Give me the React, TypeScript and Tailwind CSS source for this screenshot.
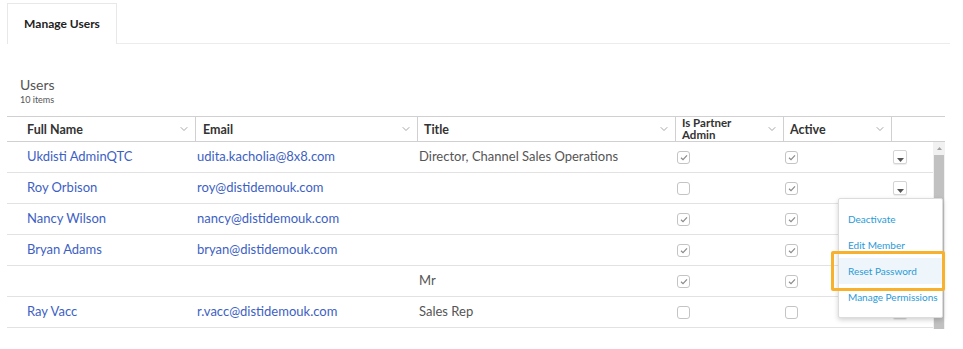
import { ChevronDown } from 'lucide-react'

// Types
interface UserRow {
  name: string
  email: string
  title: string
  partnerAdmin: boolean
  active: boolean
}

const users: UserRow[] = [
  { name: 'Ukdisti AdminQTC', email: 'udita.kacholia@8x8.com', title: 'Director, Channel Sales Operations', partnerAdmin: true, active: true },
  { name: 'Roy Orbison', email: 'roy@distidemouk.com', title: '', partnerAdmin: false, active: true },
  { name: 'Nancy Wilson', email: 'nancy@distidemouk.com', title: '', partnerAdmin: true, active: true },
  { name: 'Bryan Adams', email: 'bryan@distidemouk.com', title: '', partnerAdmin: true, active: true },
  { name: '', email: '', title: 'Mr', partnerAdmin: true, active: true },
  { name: 'Ray Vacc', email: 'r.vacc@distidemouk.com', title: 'Sales Rep', partnerAdmin: false, active: false }
]

const menuItems = ['Deactivate', 'Edit Member', 'Reset Password', 'Manage Permissions']

const CheckBox = ({ checked }: { checked: boolean }) => (
  <span className="flex h-[13px] w-[13px] items-center justify-center rounded-[3px] border border-[#c4c4c4] bg-white">
    {checked && (
      <svg width="8" height="7" viewBox="0 0 8 7">
        <path d="M1 3.8 L3 5.6 L7 1.4" fill="none" stroke="#8a8a8a" strokeWidth="1.2" />
      </svg>
    )}
  </span>
)

const ActionButton = () => (
  <span className="flex h-[14px] w-[14px] items-end justify-center rounded-[2px] border border-[#d4d4d4] bg-white pb-[1px] shadow-[0_1px_1px_rgba(0,0,0,0.08)]">
    <svg width="7" height="4" viewBox="0 0 7 4">
      <path d="M0 0 H7 L3.5 4 Z" fill="#555" />
    </svg>
  </span>
)

const HeaderCell = ({ label, className }: { label: string; className: string }) => (
  <div className={`flex h-full items-center justify-between border-r border-[#d0d0d0] ${className}`}>
    <span className="leading-[15px] font-bold text-[#333]">{label}</span>
    <ChevronDown className="mr-[5px] h-[12px] w-[12px] shrink-0 text-[#888]" strokeWidth={1.5} />
  </div>
)

const App = () => {
  return (
    <div className="relative h-[349px] w-[963px] overflow-hidden bg-white font-['Lato',sans-serif] text-[13px]">
      {/* Tabs */}
      <div className="flex pl-[7px] pr-[13px] pt-[3px]">
        <div className="flex h-[41px] w-[110px] items-center justify-center border border-b-0 border-[#e8e8e8] bg-white text-[12px] font-bold text-[#222]">
          Manage Users
        </div>
        <div className="flex-1 border-b border-[#ececec]" />
      </div>

      {/* Title */}
      <div className="mt-[32px] pl-[20px]">
        <div className="text-[14px] leading-[18px] text-[#555]">Users</div>
        <div className="text-[9px] leading-[11px] text-[#555]">10 items</div>
      </div>

      {/* Table */}
      <div className="mt-[11px] ml-[7px] w-[938px]">
        <div className="flex h-[26px] border-y border-[#d0d0d0] text-[12.5px]">
          <HeaderCell label="Full Name" className="w-[189px] pl-[20px]" />
          <HeaderCell label="Email" className="w-[222px] pl-[7px]" />
          <HeaderCell label="Title" className="w-[258px] pl-[6px]" />
          <div className="flex h-full w-[108px] items-center justify-between border-r border-[#d0d0d0] pl-[6px]">
            <span className="text-[11.5px] leading-[12px] font-bold text-[#333]">
              Is Partner
              <br />
              Admin
            </span>
            <ChevronDown className="mr-[5px] h-[12px] w-[12px] shrink-0 text-[#888]" strokeWidth={1.5} />
          </div>
          <HeaderCell label="Active" className="w-[108px] pl-[6px]" />
          <div className="flex-1" />
        </div>

        <div className="flex h-[187px]">
          <div className="w-[926px]">
            {users.map((u, i) => (
              <div key={i} className="flex h-[31px] items-center border-b border-[#e2e2e2]">
                <div className="w-[189px] pl-[20px] text-[#3d5fc4]">{u.name}</div>
                <div className="w-[222px] pl-[1px] text-[#3d5fc4]">{u.email}</div>
                <div className="w-[258px] pl-[1px] text-[#555]">{u.title}</div>
                <div className="w-[108px] pl-[1px]">
                  <CheckBox checked={u.partnerAdmin} />
                </div>
                <div className="w-[108px] pl-[1px]">
                  <CheckBox checked={u.active} />
                </div>
                <div className="flex-1 pl-[1px]">
                  <ActionButton />
                </div>
              </div>
            ))}
          </div>
          {/* Scrollbar */}
          <div className="flex w-[12px] flex-col bg-[#f1f1f1]">
            <div className="flex h-[13px] items-center justify-center">
              <svg width="5" height="3" viewBox="0 0 5 3">
                <path d="M0 3 L2.5 0 L5 3 Z" fill="#a3a3a3" />
              </svg>
            </div>
            <div className="mx-[1px] flex-1 bg-[#c1c1c1]" />
          </div>
        </div>
      </div>

      {/* Row action menu */}
      <div className="absolute top-[198px] left-[838px] w-[105px] rounded-[2px] border border-[#dcdcdc] bg-white py-[7px] shadow-[0_2px_5px_rgba(0,0,0,0.18)]">
        {menuItems.map((item) => (
          <div
            key={item}
            className={`flex h-[26px] items-center pl-[9px] text-[10px] whitespace-nowrap text-[#2a9ad6] ${
              item === 'Reset Password' ? 'bg-[#eef6fb]' : ''
            }`}
          >
            {item}
          </div>
        ))}
      </div>
      <div className="absolute top-[251px] left-[831px] h-[40px] w-[114px] rounded-[2px] border-[3px] border-[#f8b12c]" />
    </div>
  )
}

export default App
